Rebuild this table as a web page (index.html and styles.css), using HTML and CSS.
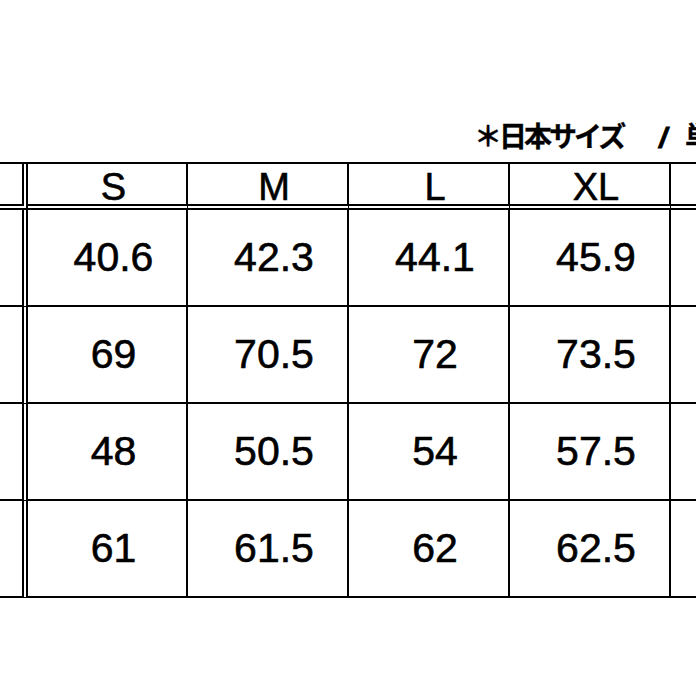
FILE: index.html
```html
<!DOCTYPE html>
<html lang="ja">
<head>
<meta charset="utf-8">
<link rel="stylesheet" href="styles.css">
</head>
<body>
<div class="page">
  <div class="title"><span class="jp">＊日本サイズ</span><span class="slash">/</span><span class="jp">単位cm</span></div>
  <div class="chart">
    <div class="cell label head"></div>
    <div class="cell head">S</div>
    <div class="cell head">M</div>
    <div class="cell head">L</div>
    <div class="cell head">XL</div>
    <div class="cell head"></div>

    <div class="cell label"></div>
    <div class="cell num">40.6</div>
    <div class="cell num">42.3</div>
    <div class="cell num">44.1</div>
    <div class="cell num">45.9</div>
    <div class="cell num"></div>

    <div class="cell label"></div>
    <div class="cell num">69</div>
    <div class="cell num">70.5</div>
    <div class="cell num">72</div>
    <div class="cell num">73.5</div>
    <div class="cell num"></div>

    <div class="cell label"></div>
    <div class="cell num">48</div>
    <div class="cell num">50.5</div>
    <div class="cell num">54</div>
    <div class="cell num">57.5</div>
    <div class="cell num"></div>

    <div class="cell label"></div>
    <div class="cell num">61</div>
    <div class="cell num">61.5</div>
    <div class="cell num">62</div>
    <div class="cell num">62.5</div>
    <div class="cell num"></div>
  </div>
</div>
</body>
</html>
```

FILE: styles.css
```css
html, body {
  margin: 0;
  padding: 0;
  background: #ffffff;
  overflow: hidden;
}

.page {
  width: 696px;
  height: 696px;
  overflow: hidden;
  color: #000;
}

.title {
  margin-top: 120px;
  height: 30px;
  line-height: 30px;
  padding-left: 474px;
  white-space: nowrap;
  font-family: "Noto Sans CJK JP", "Noto Sans", sans-serif;
  font-weight: 700;
  font-size: 28px;
}

.title .jp {
  letter-spacing: -3px;
  -webkit-text-stroke: 0.3px #000;
}

.title .slash {
  display: inline-block;
  margin: 0 18px 0 36px;
  font-family: "Liberation Sans", sans-serif;
  font-weight: 700;
  font-style: italic;
  -webkit-text-stroke: 1px #000;
}

.chart {
  margin-top: 12px;
  margin-left: -122px;
  display: grid;
  grid-template-columns: 148px 160px 161px 161px 161px 161px;
  grid-template-rows: 46px 97px 97px 97px 97px;
  width: max-content;
  border-top: 2px solid #000;
  border-left: 2px solid #000;
  font-family: "Liberation Sans", Arial, sans-serif;
}

.cell {
  box-sizing: border-box;
  border-right: 2px solid #000;
  border-bottom: 2px solid #000;
  display: flex;
  align-items: center;
  justify-content: center;
  padding-left: 13px;
  line-height: 1;
  -webkit-text-stroke: 0.6px #000;
}

.cell.head {
  border-bottom: 6px double #000;
  font-size: 38px;
  padding-top: 5px;
}

.cell.label {
  border-right: 6px double #000;
}

.cell.num {
  font-size: 41px;
}
```
